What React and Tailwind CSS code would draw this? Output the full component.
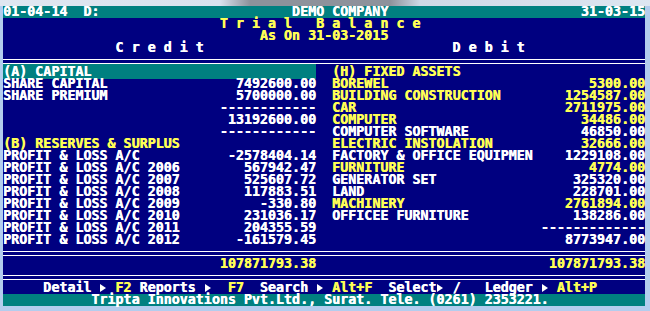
const W = 'text-white';
const Y = 'text-[#ffff55]';

const pad = (label, amount, width) => label.padEnd(width - amount.length) + amount;

// left half: label at col 0, amount ending at col 38
const left = [
  { label: '(A) CAPITAL', amount: '', c: W, hl: true },
  { label: 'SHARE CAPITAL', amount: '7492600.00', c: W },
  { label: 'SHARE PREMIUM', amount: '5700000.00', c: W },
  { label: '', amount: '------------', c: W },
  { label: '', amount: '13192600.00', c: W },
  { label: '', amount: '------------', c: W },
  { label: '(B) RESERVES & SURPLUS', amount: '', c: Y },
  { label: 'PROFIT & LOSS A/C', amount: '-2578404.14', c: W },
  { label: 'PROFIT & LOSS A/C 2006', amount: '567942.47', c: W },
  { label: 'PROFIT & LOSS A/C 2007', amount: '525607.72', c: W },
  { label: 'PROFIT & LOSS A/C 2008', amount: '117883.51', c: W },
  { label: 'PROFIT & LOSS A/C 2009', amount: '-330.80', c: W },
  { label: 'PROFIT & LOSS A/C 2010', amount: '231036.17', c: W },
  { label: 'PROFIT & LOSS A/C 2011', amount: '204355.59', c: W },
  { label: 'PROFIT & LOSS A/C 2012', amount: '-161579.45', c: W },
];

// right half: label at col 41, amount ending at col 79
const right = [
  { label: '(H) FIXED ASSETS', amount: '', c: Y },
  { label: 'BOREWEL', amount: '5300.00', c: Y },
  { label: 'BUILDING CONSTRUCTION', amount: '1254587.00', c: Y },
  { label: 'CAR', amount: '2711975.00', c: Y },
  { label: 'COMPUTER', amount: '34486.00', c: Y },
  { label: 'COMPUTER SOFTWARE', amount: '46850.00', c: W },
  { label: 'ELECTRIC INSTOLATION', amount: '32666.00', c: Y },
  { label: 'FACTORY & OFFICE EQUIPMEN', amount: '1229108.00', c: W },
  { label: 'FURNITURE', amount: '4774.00', c: Y },
  { label: 'GENERATOR SET', amount: '325320.00', c: W },
  { label: 'LAND', amount: '228701.00', c: W },
  { label: 'MACHINERY', amount: '2761894.00', c: Y },
  { label: 'OFFICEE FURNITURE', amount: '138286.00', c: W },
  { label: '', amount: '-------------', c: W },
  { label: '', amount: '8773947.00', c: W },
];

function Row({ children, className = '' }) {
  return <div className={`h-[12px] ${className}`}>{children}</div>;
}

function DoubleLine() {
  return (
    <div className="h-[12px] pt-[5px]">
      <div className="h-[5px] border-y border-white" />
    </div>
  );
}

function Arrow() {
  return (
    <span className="inline-block w-[1ch] h-[12px] align-top">
      <svg width="7" height="9" viewBox="0 0 7 9" className="block mt-[2px] ml-[1px]">
        <path d="M0 0 L6 4 L0 8 Z" fill="#ffffff" />
      </svg>
    </span>
  );
}

export default function App() {
  return (
    <div className="w-[650px] h-[311px] bg-[#b3cdee] flex flex-col font-['DejaVu_Sans_Mono',monospace] font-bold text-[13.33px] leading-[12px] [text-shadow:0.5px_0_0_currentColor]">
      <div className="h-[6px] bg-[linear-gradient(to_right,#dfe7f1_0px,#d9e2ee_220px,#8d929b_250px,#8d929b_390px,#cfd9e6_420px,#dde6f1_100%)]" />
      <div className="ml-[3px] w-[642px] bg-[#000080] whitespace-pre">
        {/* title bar */}
        <Row className="bg-[#008080] text-white">
          {'01-04-14  D:' + ' '.repeat(24) + 'DEMO COMPANY' + ' '.repeat(24) + '31-03-15'}
        </Row>
        <Row className={Y}>{' '.repeat(27) + 'T r i a l   B a l a n c e'}</Row>
        <Row className={Y}>{' '.repeat(32) + 'As On 31-03-2015'}</Row>
        <Row className={W}>{' '.repeat(14) + 'C r e d i t' + ' '.repeat(31) + 'D e b i t'}</Row>
        <DoubleLine />

        {left.map((l, i) => {
          const r = right[i];
          return (
            <Row key={i}>
              {l.hl ? (
                <span className="bg-[#008080] text-white">{pad(l.label, l.amount, 39)}</span>
              ) : (
                <span className={l.c}>{pad(l.label, l.amount, 39)}</span>
              )}
              <span>{'  '}</span>
              <span className={r.c}>{pad(r.label, r.amount, 39)}</span>
            </Row>
          );
        })}

        <DoubleLine />
        <Row className={Y}>
          {pad('', '107871793.38', 39) + '  ' + pad('', '107871793.38', 39)}
        </Row>
        <DoubleLine />

        {/* key help */}
        <Row className={W}>
          {'     Detail '}
          <Arrow />
          {' '}
          <span className={Y}>F2</span>
          {' Reports '}
          <Arrow />
          {'  '}
          <span className={Y}>F7</span>
          {'  Search '}
          <Arrow />
          {' '}
          <span className={Y}>Alt+F</span>
          {'  Select'}
          <Arrow />
          {' /   Ledger '}
          <Arrow />
          {' '}
          <span className={Y}>Alt+P</span>
        </Row>
        <Row className="bg-[#008080] text-white">
          {' '.repeat(11) + 'Tripta Innovations Pvt.Ltd., Surat. Tele. (0261) 2353221.'}
        </Row>
      </div>
    </div>
  );
}
